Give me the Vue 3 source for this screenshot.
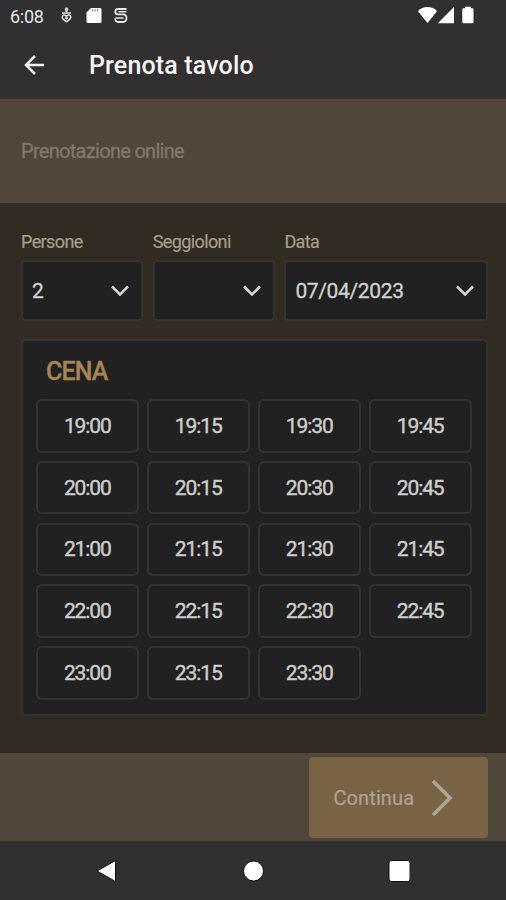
<template>
  <div class="screen">
    <header class="top">
      <div class="status-bar">
        <span class="clock">6:08</span>
        <svg class="status-left" width="70" height="20" viewBox="0 0 70 20">
          <g fill="none" stroke="#e4e2e2" stroke-width="1.5">
            <path d="M6.500 2.500v4.500M4.800 4.500h3.400" stroke-width="2" />
            <path d="M2 8h9" />
            <path d="M6.500 11.500C5 9 2.200 9.700 2.200 12c0 2.200 2.600 3.600 4.300 4.700 1.700-1.100 4.300-2.500 4.300-4.700 0-2.300-2.800-3-4.300-.5z" />
            <path d="M5 12.500l1.500 1.500L8 12.500" stroke-width="1.200" />
          </g>
          <path d="M31 3h9q1.500 0 1.500 1.500v12q0 1.500-1.500 1.500H28q-1.500 0-1.500-1.500V7.500z" fill="#fff" />
          <path d="M32.500 4.500v1.800M35 4.500v1.800M37.500 4.500v1.800" stroke="#666" stroke-width="1.200" />
          <g fill="none" stroke="#e8e6e6" stroke-width="1.800">
            <path d="M66.500 4H58q-2.700 0-2.700 2.700t2.700 2.700h5q3.500 0 3.500 3.600T63 17h-4.500q-3.300 0-3.300-3.500" />
            <path d="M66.500 6.800h-8M55.500 13H63.500" stroke-width="1.500" />
          </g>
        </svg>
        <svg class="status-right" width="60" height="20" viewBox="0 0 60 20">
          <path d="M0 6.200Q3.500 2 9.500 2t9.500 4.200L9.500 18z" fill="#fff" />
          <path d="M36 2v16.200H19.800z" fill="#fff" />
          <path d="M47 1.800h6v1.500h1.200q1.300 0 1.300 1.200V17q0 1.200-1.200 1.200h-8.800q-1.200 0-1.200-1.200V4.500q0-1.200 1.200-1.200H47z" fill="#fff" />
        </svg>
      </div>
      <div class="app-bar">
        <svg class="back" width="22" height="20" viewBox="0 0 22 20">
          <path d="M11 1L2 10l9 9M2.500 10H20" fill="none" stroke="#f2f2f2" stroke-width="2.500" />
        </svg>
        <h1>Prenota tavolo</h1>
      </div>
    </header>

    <div class="banner"><span>Prenotazione online</span></div>

    <main>
      <div class="fields">
        <div v-for="field in fields" :key="field.label" class="field">
          <label>{{ field.label }}</label>
          <div class="select">
            <span>{{ field.value }}</span>
            <svg width="20" height="14" viewBox="0 0 20 14">
              <path d="M2 2.500l8 8 8-8" fill="none" stroke="#d6d6d6" stroke-width="2.500" />
            </svg>
          </div>
        </div>
      </div>

      <section class="card">
        <h2>CENA</h2>
        <div class="slots">
          <button v-for="slot in slots" :key="slot" type="button" class="slot">{{ slot }}</button>
        </div>
      </section>
    </main>

    <footer class="footer">
      <button type="button" class="continue">
        <span>Continua</span>
        <svg width="22" height="38" viewBox="0 0 22 38">
          <path d="M2 2l17 17L2 36" fill="none" stroke="#b0a496" stroke-width="3.700" />
        </svg>
      </button>
    </footer>

    <nav class="nav-bar">
      <svg width="22" height="24" viewBox="0 0 22 24"><path d="M1 12L19.500 1.500v21z" fill="#fff" stroke="#111" /></svg>
      <svg width="22" height="24" viewBox="0 0 22 24"><circle cx="11.500" cy="12" r="10" fill="#fff" stroke="#111" /></svg>
      <svg width="22" height="24" viewBox="0 0 22 24"><rect x="1" y="1.500" width="21" height="21" rx="2.500" fill="#fff" stroke="#111" /></svg>
    </nav>
  </div>
</template>

<script setup>
const fields = [
  { label: 'Persone', value: '2' },
  { label: 'Seggioloni', value: '' },
  { label: 'Data', value: '07/04/2023' }
];

const slots = [
  '19:00', '19:15', '19:30', '19:45',
  '20:00', '20:15', '20:30', '20:45',
  '21:00', '21:15', '21:30', '21:45',
  '22:00', '22:15', '22:30', '22:45',
  '23:00', '23:15', '23:30'
];
</script>

<style>
body {
  margin: 0;
  background: #312f30;
}
</style>

<style scoped>
.screen {
  display: flex;
  flex-direction: column;
  width: 506px;
  height: 900px;
  overflow: hidden;
  background: #322b24;
  font-family: Roboto, sans-serif;
}

.top {
  height: 99px;
  background: #312f30;
}

.status-bar {
  display: flex;
  align-items: center;
  height: 32px;
  padding: 0 28px 0 10px;
}

.clock {
  width: 50px;
  color: #e6e6e6;
  font-size: 18px;
  letter-spacing: -0.3px;
}

.status-left {
  margin-top: -2px;
}

.status-right {
  margin: -2px 0 0 auto;
}

.app-bar {
  display: flex;
  align-items: center;
  height: 67px;
  padding-left: 24px;
}

.back {
  margin-top: -2px;
}

h1 {
  margin: 0 0 0 43px;
  color: #f4f4f4;
  font-size: 25px;
  font-weight: 500;
  letter-spacing: 0.15px;
}

.banner {
  display: flex;
  align-items: center;
  height: 104px;
  padding-left: 21px;
  background: #50463a;
  color: #83796b;
  font-size: 20px;
  letter-spacing: -0.7px;
  -webkit-text-stroke: 0.3px;
}

main {
  height: 550px;
  padding: 0 18.500px 0 21px;
  box-sizing: border-box;
}

.fields {
  display: grid;
  grid-template-columns: 122px 122px 1fr;
  gap: 9.700px;
  padding-top: 26px;
}

label {
  display: block;
  height: 31px;
  color: #a89d8a;
  font-size: 18px;
  line-height: 25px;
  letter-spacing: -0.6px;
  -webkit-text-stroke: 0.2px;
}

.select {
  display: flex;
  align-items: center;
  justify-content: space-between;
  box-sizing: border-box;
  height: 61px;
  padding: 0 11px 0 9px;
  border: 2px solid #343332;
  border-radius: 4px;
  background: #212121;
  color: #d2d2d2;
  font-size: 21px;
  letter-spacing: -0.35px;
  -webkit-text-stroke: 0.3px;
}

.card {
  box-sizing: border-box;
  height: 377px;
  margin-top: 18px;
  padding: 14px 14px 0 13px;
  border: 2px solid #343332;
  border-radius: 5px;
  background: #212121;
}

h2 {
  height: 44px;
  margin: 0 0 0 10px;
  color: #a88555;
  font-size: 25px;
  font-weight: 500;
  line-height: 34px;
  letter-spacing: -0.9px;
  -webkit-text-stroke: 0.3px;
}

.slots {
  display: grid;
  grid-template-columns: repeat(4, 1fr);
  grid-auto-rows: 53.500px;
  gap: 8.300px;
}

.slot {
  padding: 0;
  border: 2px solid #333;
  border-radius: 6px;
  background: #212121;
  color: #cdcdcd;
  font-family: inherit;
  font-size: 21px;
  letter-spacing: -1.1px;
  -webkit-text-stroke: 0.4px;
}

.footer {
  display: flex;
  justify-content: flex-end;
  box-sizing: border-box;
  height: 88px;
  padding: 4px 18.500px 0 0;
  background: #50463a;
}

.continue {
  display: flex;
  align-items: center;
  width: 179px;
  height: 81px;
  padding: 0 0 0 25px;
  border: 0;
  border-radius: 4px;
  background: #786344;
  color: #b0a496;
  font-family: inherit;
  font-size: 20px;
  letter-spacing: 0.1px;
  -webkit-text-stroke: 0.2px;
}

.continue svg {
  margin-left: 17px;
}

.nav-bar {
  display: flex;
  justify-content: space-between;
  align-items: center;
  height: 59px;
  padding: 0 96px;
  background: #312f30;
}
</style>
